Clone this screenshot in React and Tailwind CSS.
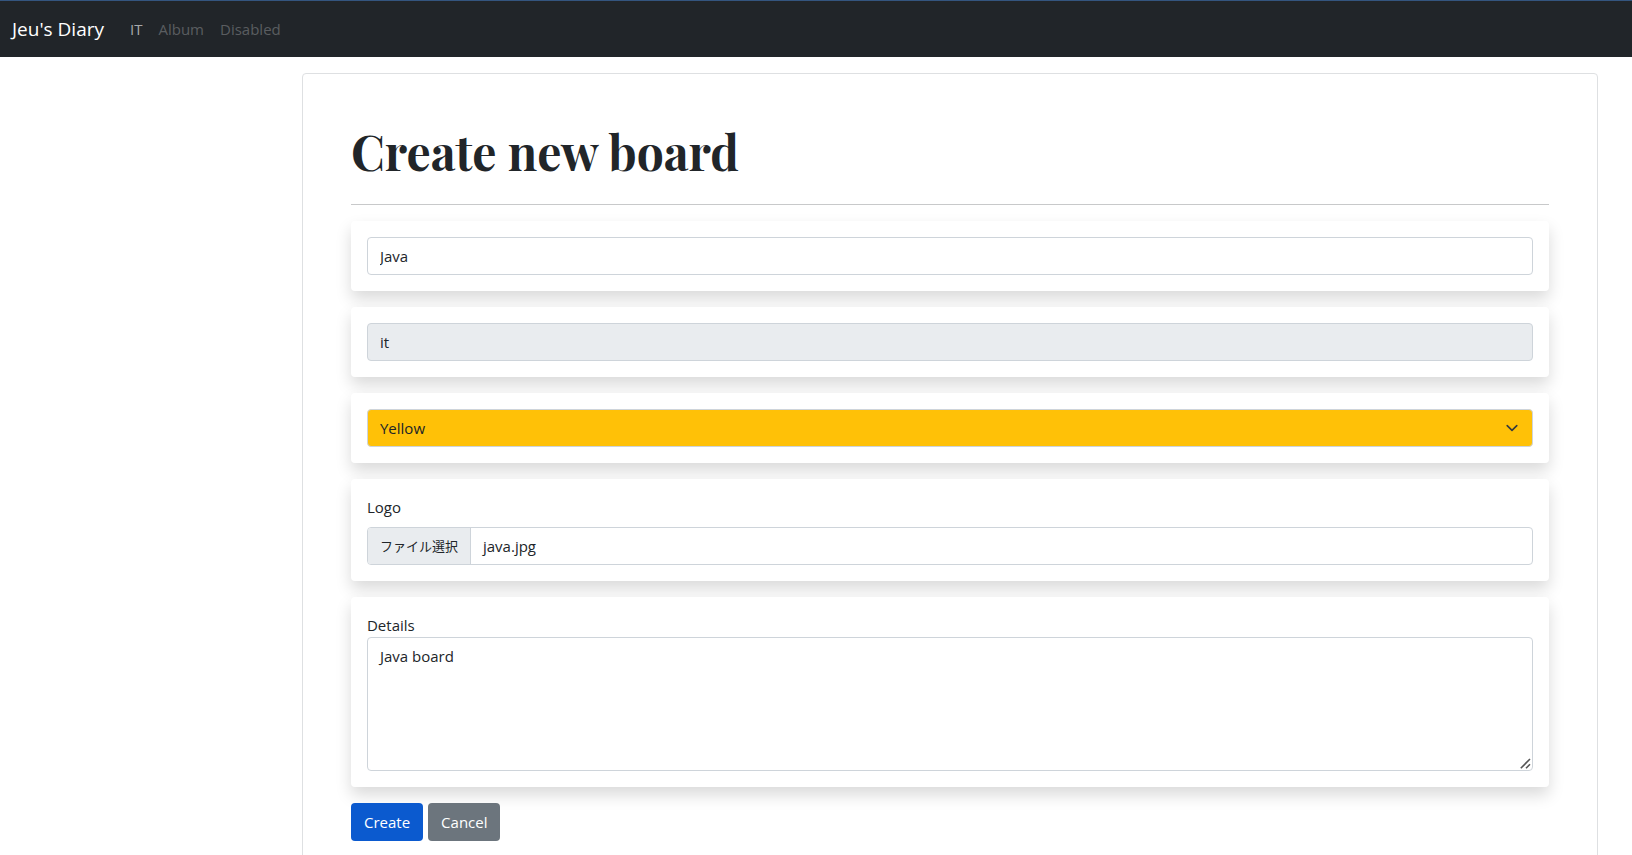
import { useState } from "react";
import clsx from "clsx";

const navLinks = [
  { label: "IT", active: true },
  { label: "Album", active: false },
  { label: "Disabled", active: false },
];

const fieldClass =
  "block w-full rounded border border-[#ced4da] px-3 text-[15px] leading-6 text-[#212529]";

function Panel({ children }) {
  return (
    <div className="mb-4 rounded bg-white p-4 shadow-[0_8px_16px_rgba(0,0,0,0.15)]">
      {children}
    </div>
  );
}

function Navbar() {
  return (
    <nav className="flex h-[57px] items-center border-t border-[#34557f] bg-[#212529] px-3">
      <a href="#" className="mr-[26px] text-[19px] leading-[30px] text-white">
        Jeu's Diary
      </a>
      <ul className="flex gap-4 text-[15px] leading-6">
        {navLinks.map((link) => (
          <li key={link.label}>
            <a
              href="#"
              className={clsx(link.active ? "text-[#a6a8a9]" : "text-[#5a5d60]")}
            >
              {link.label}
            </a>
          </li>
        ))}
      </ul>
    </nav>
  );
}

function BoardForm() {
  const [fileName, setFileName] = useState("java.jpg");

  return (
    <form onSubmit={(e) => e.preventDefault()}>
      <Panel>
        <input
          type="text"
          aria-label="Board name"
          defaultValue="Java"
          className={clsx(fieldClass, "h-[38px] bg-white")}
        />
      </Panel>
      <Panel>
        <input
          type="text"
          aria-label="Category"
          value="it"
          readOnly
          className={clsx(fieldClass, "h-[38px] bg-[#e9ecef]")}
        />
      </Panel>
      <Panel>
        <div className="relative">
          <select
            aria-label="Color"
            defaultValue="Yellow"
            className={clsx(fieldClass, "h-[38px] appearance-none bg-[#ffc107]")}
          >
            <option>Yellow</option>
            <option>Blue</option>
            <option>Green</option>
            <option>Red</option>
          </select>
          <svg
            viewBox="0 0 16 16"
            className="pointer-events-none absolute top-[11px] right-[13px] h-4 w-4"
            fill="none"
            stroke="#343a40"
            strokeWidth="1.6"
            strokeLinecap="round"
            strokeLinejoin="round"
            aria-hidden="true"
          >
            <path d="M3.2 5.6 8 10.4l4.8-4.8" />
          </svg>
        </div>
      </Panel>
      <Panel>
        <label htmlFor="logo" className="mb-2 block text-[15px] leading-6">
          Logo
        </label>
        <label className="relative flex h-[38px] cursor-pointer overflow-hidden rounded border border-[#ced4da] bg-white text-[15px] leading-6">
          <input
            id="logo"
            type="file"
            className="sr-only"
            onChange={(e) => setFileName(e.target.files[0]?.name ?? "")}
          />
          <span className="flex items-center border-r border-[#ced4da] bg-[#e9ecef] px-3 text-[13px]">
            ファイル選択
          </span>
          <span className="flex items-center px-3">{fileName}</span>
        </label>
      </Panel>
      <Panel>
        <label htmlFor="details" className="block text-[15px] leading-6">
          Details
        </label>
        <div className="relative">
          <textarea
            id="details"
            defaultValue="Java board"
            className={clsx(
              fieldClass,
              "h-[134px] resize-y bg-white py-1.5 [&::-webkit-resizer]:bg-transparent"
            )}
          />
          <svg
            viewBox="0 0 12 12"
            className="pointer-events-none absolute right-px bottom-px h-3 w-3"
            fill="none"
            stroke="#555"
            strokeWidth="1.6"
            aria-hidden="true"
          >
            <path d="M.8 10.2 10 1M6 10.2 10 6.2" />
          </svg>
        </div>
      </Panel>
      <div className="flex gap-[5px] text-[15px] leading-6 font-medium text-white">
        <button type="submit" className="h-[38px] rounded bg-[#0b5acf] px-[13px]">
          Create
        </button>
        <button type="button" className="h-[38px] rounded bg-[#6c757d] px-[13px]">
          Cancel
        </button>
      </div>
    </form>
  );
}

export default function App() {
  return (
    <div className="h-screen overflow-hidden bg-white font-['Open_Sans','Noto_Sans_CJK_JP',sans-serif] text-[#212529]">
      <Navbar />
      <div className="flex pt-4">
        <aside className="w-1/6 shrink-0" />
        <main className="min-w-0 flex-1 pr-[34px] pl-[30px]">
          <section className="rounded border border-[#dee0e2] p-12">
            <h1 className="border-b border-[#c8c9ca] pb-6 font-['Playfair_Display','Liberation_Serif',serif] text-5xl leading-[58px] font-bold">
              Create new board
            </h1>
            <div className="pt-4">
              <BoardForm />
            </div>
          </section>
        </main>
      </div>
    </div>
  );
}
